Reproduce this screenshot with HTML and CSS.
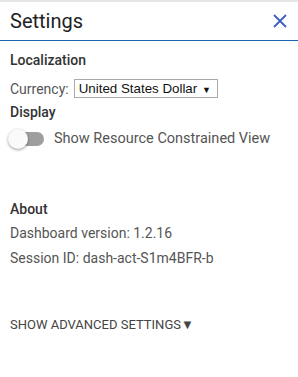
FILE: index.html
```html
<!DOCTYPE html>
<html lang="en">
<head>
    <meta charset="UTF-8">
    <meta name="viewport" content="width=device-width, initial-scale=1.0">
    <title>Settings</title>
    <link rel="stylesheet" href="styles.css">
</head>
<body>
    <div class="panel">
        <header class="panel-header">
            <h1>Settings</h1>
            <button class="close" aria-label="Close">
                <svg width="14" height="14" viewBox="0 0 14 14">
                    <path d="M1 1 L13 13 M13 1 L1 13" stroke="#3f5bc4" stroke-width="1.8" fill="none"/>
                </svg>
            </button>
        </header>
        <main class="panel-body">
            <h2>Localization</h2>
            <div class="row">
                <label for="currency">Currency:</label>
                <div class="select" id="currency">United States Dollar <span class="arrow">▼</span></div>
            </div>
            <h2 class="display">Display</h2>
            <div class="toggle-row">
                <span class="toggle"><span class="thumb"></span></span>
                <span class="toggle-label">Show Resource Constrained View</span>
            </div>

            <h2 class="about">About</h2>
            <p>Dashboard version: 1.2.16</p>
            <p>Session ID: dash-act-S1m4BFR-b</p>

            <div class="advanced">SHOW ADVANCED SETTINGS▼</div>
        </main>
    </div>
</body>
</html>
```

FILE: styles.css
```css
body {
    margin: 0;
    font-family: Roboto, "Noto Sans", sans-serif;
    color: #333;
    background-color: #fff;
}

.panel {
    border-top: 2px solid #e6e6e6;
}

.panel-header {
    display: flex;
    align-items: center;
    justify-content: space-between;
    height: 38px;
    padding: 0 11px 0 10px;
    border-bottom: 1px solid #1e64b4;
}

.panel-header h1 {
    margin: 0;
    font-size: 20px;
    font-weight: 400;
    color: #222;
}

.close {
    border: none;
    background: none;
    padding: 0;
    display: flex;
    cursor: pointer;
}

.panel-body {
    padding: 0 10px;
    font-size: 14px;
}

h2 {
    margin: 11px 0 0;
    font-size: 14px;
    font-weight: 500;
    color: #333;
    line-height: 16px;
}

.row {
    display: flex;
    align-items: center;
    margin-top: 11px;
    gap: 5px;
    color: #555;
}

.select {
    font-family: "Liberation Sans", Arial, sans-serif;
    font-size: 13.33px;
    color: #111;
    border: 1px solid #aaa;
    padding: 0 4px;
    height: 17px;
    line-height: 17px;
    width: 134px;
}

.select .arrow {
    font-size: 9px;
    margin-left: 1px;
}

h2.display {
    margin-top: 6px;
}

.toggle-row {
    display: flex;
    align-items: center;
    gap: 10px;
    margin-top: 10px;
    color: #555;
}

.toggle-label {
    font-size: 14.5px;
}

.toggle {
    position: relative;
    width: 34px;
    height: 14px;
    border-radius: 7px;
    background-color: #9e9e9e;
}

.thumb {
    position: absolute;
    left: -2px;
    top: -3px;
    width: 20px;
    height: 20px;
    border-radius: 50%;
    background-color: #fafafa;
    box-shadow: 0 1px 3px rgba(0, 0, 0, 0.4);
}

h2.about {
    margin-top: 54px;
}

p {
    margin: 8px 0 0;
    color: #555;
    line-height: 16px;
}

p + p {
    margin-top: 9px;
}

.advanced {
    margin-top: 51px;
    font-size: 13px;
    color: #444;
}
```
